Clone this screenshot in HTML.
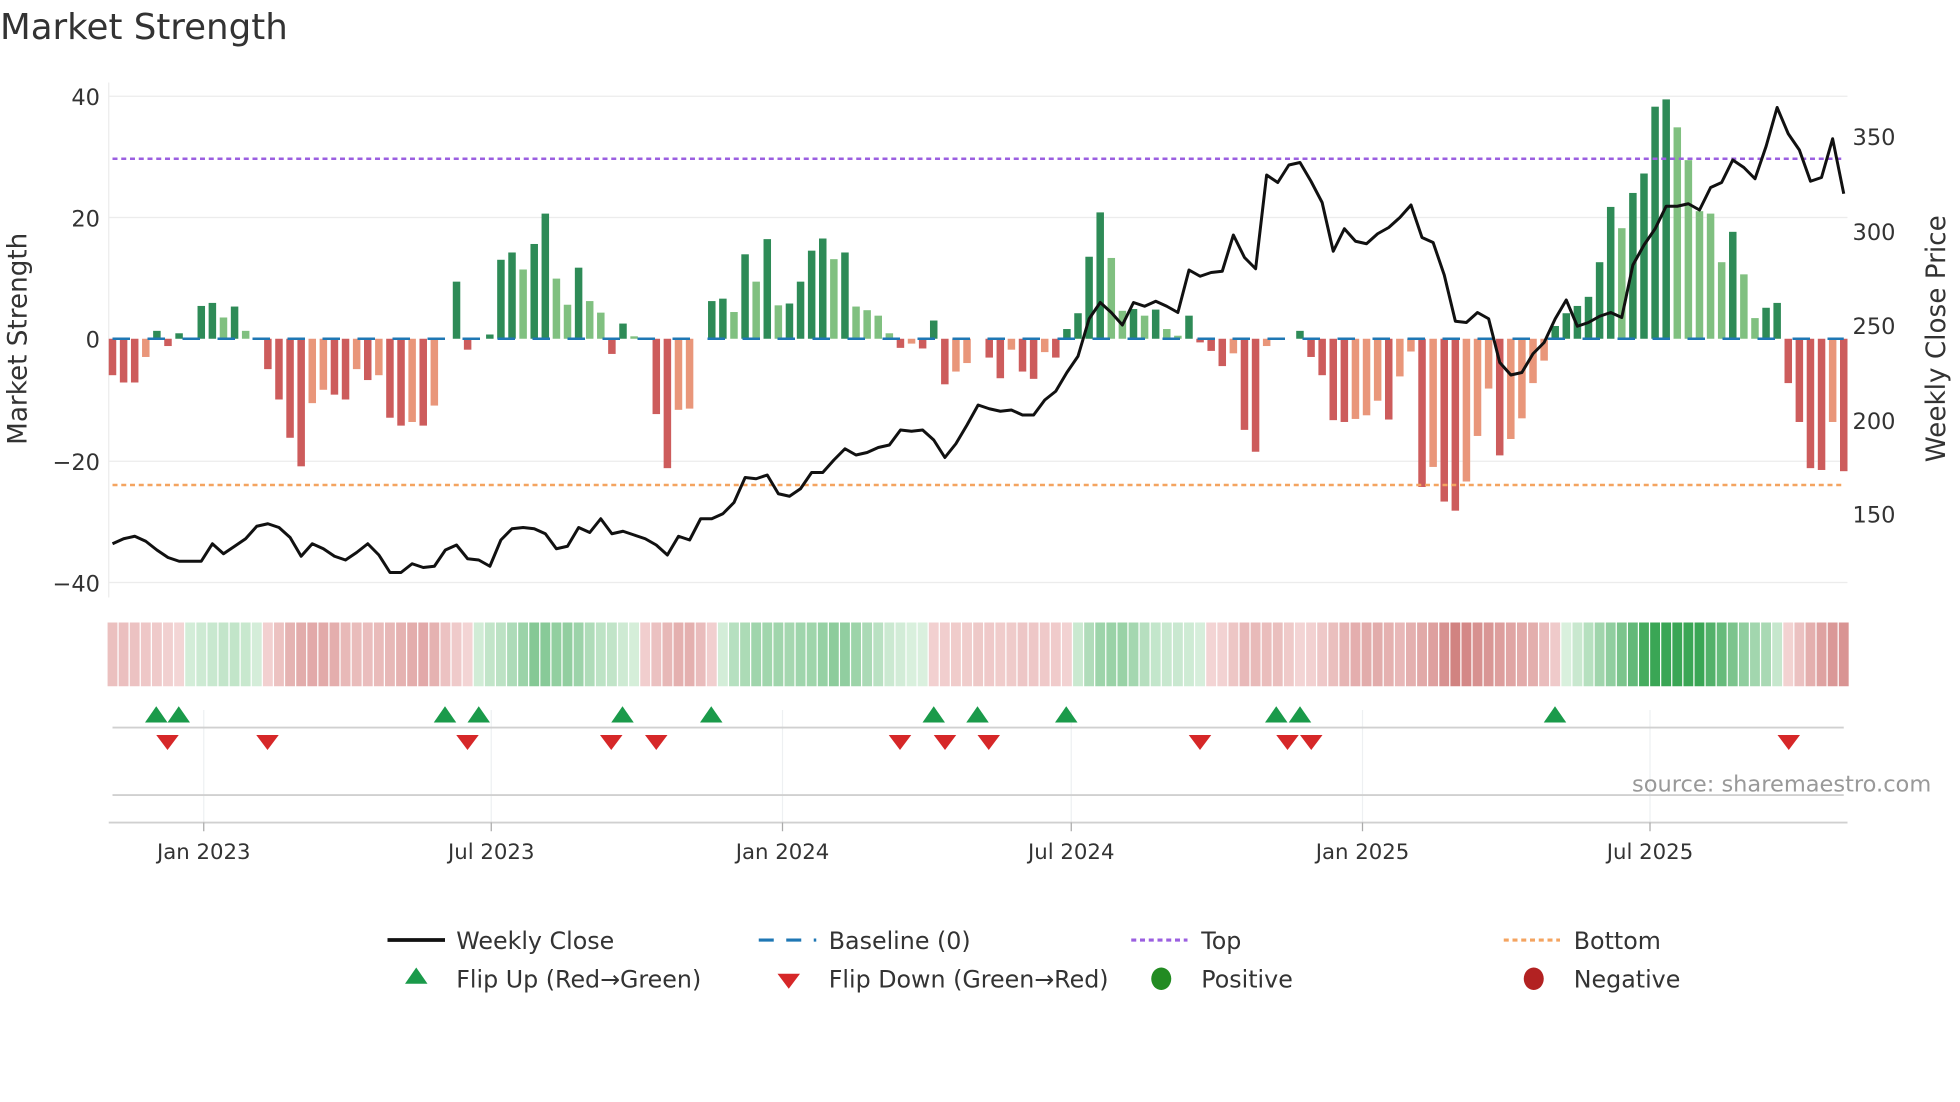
<!DOCTYPE html>
<html><head><meta charset="utf-8"><style>
html,body{margin:0;padding:0;background:#fff;}
svg{display:block;font-family:"DejaVu Sans","Liberation Sans",sans-serif;}
</style></head><body>
<svg id="c" width="1960" height="1102" viewBox="0 0 1568 881.6" xmlns="http://www.w3.org/2000/svg">
<rect width="1568" height="882" fill="#fff"/>
<text x="0" y="31" font-size="28.5" fill="#333">Market Strength</text>
<g stroke="#ececec" stroke-width="1">
<line x1="87" x2="1478" y1="77" y2="77"/><line x1="87" x2="1478" y1="174" y2="174"/>
<line x1="87" x2="1478" y1="369" y2="369"/><line x1="87" x2="1478" y1="466" y2="466"/>
</g>
<line x1="87" x2="87" y1="66" y2="478" stroke="#ececec"/>
<g font-size="18" fill="#333" text-anchor="end">
<text x="80" y="84">40</text><text x="80" y="181">20</text><text x="80" y="278">0</text>
<text x="80" y="376">−20</text><text x="80" y="473">−40</text>
</g>
<g font-size="18" fill="#333">
<text x="1482" y="116">350</text><text x="1482" y="192">300</text><text x="1482" y="267">250</text>
<text x="1482" y="343">200</text><text x="1482" y="418">150</text>
</g>
<text transform="translate(21,271) rotate(-90)" font-size="21" fill="#333" text-anchor="middle">Market Strength</text>
<text transform="translate(1556,271) rotate(-90)" font-size="21" fill="#333" text-anchor="middle">Weekly Close Price</text>
<g id="bars"></g>
<line x1="90" x2="1475" y1="271" y2="271" stroke="#1f77b4" stroke-width="2" stroke-dasharray="14,14"/>
<line x1="90" x2="1475" y1="127" y2="127" stroke="#9b5fe0" stroke-width="2" stroke-dasharray="4,3"/>
<line x1="90" x2="1475" y1="388" y2="388" stroke="#f4a460" stroke-width="2" stroke-dasharray="4,3"/>
<polyline id="price" fill="none" stroke="#111" stroke-width="2.4" stroke-linejoin="round"/>
<g id="strip"></g>
<g stroke="#eef0f2"><line x1="163" x2="163" y1="568" y2="658"/><line x1="393" x2="393" y1="568" y2="658"/><line x1="626" x2="626" y1="568" y2="658"/><line x1="857" x2="857" y1="568" y2="658"/><line x1="1090" x2="1090" y1="568" y2="658"/><line x1="1320" x2="1320" y1="568" y2="658"/></g>
<line x1="90" x2="1475" y1="582" y2="582" stroke="#d0d0d0" stroke-width="1.5"/>
<line x1="90" x2="1475" y1="636" y2="636" stroke="#d0d0d0" stroke-width="1.5"/>
<line x1="87" x2="1478" y1="658" y2="658" stroke="#d0d0d0" stroke-width="1.5"/>
<g id="tri"></g>
<g stroke="#aaa"><line x1="163" x2="163" y1="658" y2="665"/><line x1="393" x2="393" y1="658" y2="665"/><line x1="626" x2="626" y1="658" y2="665"/><line x1="857" x2="857" y1="658" y2="665"/><line x1="1090" x2="1090" y1="658" y2="665"/><line x1="1320" x2="1320" y1="658" y2="665"/></g>
<g font-size="17" fill="#333" text-anchor="middle">
<text x="163" y="687">Jan 2023</text><text x="393" y="687">Jul 2023</text><text x="626" y="687">Jan 2024</text>
<text x="857" y="687">Jul 2024</text><text x="1090" y="687">Jan 2025</text><text x="1320" y="687">Jul 2025</text>
</g>
<text x="1545" y="633" font-size="18" fill="#999" text-anchor="end">source: sharemaestro.com</text>
<g font-size="19" fill="#333">
<line x1="310" x2="356" y1="752" y2="752" stroke="#111" stroke-width="3"/>
<text x="365" y="759">Weekly Close</text>
<line x1="607" x2="653" y1="752" y2="752" stroke="#1f77b4" stroke-width="2.5" stroke-dasharray="12,10"/>
<text x="663" y="759">Baseline (0)</text>
<line x1="905" x2="950" y1="752" y2="752" stroke="#9b5fe0" stroke-width="2.5" stroke-dasharray="4,3"/>
<text x="961" y="759">Top</text>
<line x1="1203" x2="1248" y1="752" y2="752" stroke="#f4a460" stroke-width="2.5" stroke-dasharray="4,3"/>
<text x="1259" y="759">Bottom</text>
<polygon points="333,774 342,787 324,787" fill="#1a9a4a"/>
<text x="365" y="790">Flip Up (Red→Green)</text>
<polygon points="622,779 640,779 631,791" fill="#d62728"/>
<text x="663" y="790">Flip Down (Green→Red)</text>
<ellipse cx="929" cy="783" rx="8" ry="9" fill="#228b22"/>
<text x="961" y="790">Positive</text>
<ellipse cx="1227" cy="783" rx="8" ry="9" fill="#b22222"/>
<text x="1259" y="790">Negative</text>
</g>
</svg>
<script>
var V=[[-6,'r'],[-7.2,'r'],[-7.2,'r'],[-3,'s'],[1.3,'d'],[-1.2,'r'],[0.9,'d'],[0,''],[5.4,'d'],[5.9,'d'],[3.5,'l'],[5.3,'d'],[1.3,'l'],[0,''],
[-5,'r'],[-10,'r'],[-16.3,'r'],[-21,'r'],[-10.6,'s'],[-8.4,'s'],[-9.2,'r'],[-10,'r'],[-5,'s'],[-6.8,'r'],[-6,'s'],[-13,'r'],[-14.3,'r'],[-13.7,'s'],[-14.3,'r'],[-11,'s'],[0,''],
[9.4,'d'],[-1.8,'r'],[0,''],[0.7,'d'],[13,'d'],[14.2,'d'],[11.4,'l'],[15.6,'d'],[20.6,'d'],[9.9,'l'],[5.6,'l'],[11.7,'d'],[6.2,'l'],[4.3,'l'],[-2.5,'r'],[2.5,'d'],[0.4,'l'],[0,''],
[-12.4,'r'],[-21.3,'r'],[-11.7,'s'],[-11.5,'s'],[0,''],[6.2,'d'],[6.6,'d'],[4.4,'l'],[13.9,'d'],[9.4,'l'],[16.4,'d'],[5.5,'l'],[5.8,'d'],[9.4,'d'],[14.5,'d'],[16.5,'d'],[13.1,'l'],[14.2,'d'],[5.3,'l'],[4.7,'l'],[3.8,'l'],[0.9,'l'],
[-1.5,'r'],[-0.8,'s'],[-1.6,'r'],[3,'d'],[-7.5,'r'],[-5.4,'s'],[-4,'s'],[0,''],[-3.1,'r'],[-6.5,'r'],[-1.8,'s'],[-5.4,'r'],[-6.6,'r'],[-2.2,'s'],[-3.1,'r'],
[1.6,'d'],[4.2,'d'],[13.5,'d'],[20.8,'d'],[13.3,'l'],[4.6,'l'],[4.9,'d'],[3.8,'l'],[4.8,'d'],[1.6,'l'],[0.5,'l'],[3.8,'d'],
[-0.6,'r'],[-2,'r'],[-4.5,'r'],[-2.4,'s'],[-15,'r'],[-18.6,'r'],[-1.2,'s'],[0,''],[0,''],[1.3,'d'],
[-3,'r'],[-6,'r'],[-13.4,'r'],[-13.7,'r'],[-13.2,'s'],[-12.6,'s'],[-10.2,'s'],[-13.3,'r'],[-6.2,'s'],[-2.1,'s'],[-24.4,'r'],[-21.1,'s'],[-26.8,'r'],[-28.3,'r'],[-23.5,'s'],[-16,'s'],[-8.2,'s'],[-19.2,'r'],[-16.5,'s'],[-13.1,'s'],[-7.3,'s'],[-3.6,'s'],
[2.1,'d'],[4.2,'d'],[5.4,'d'],[6.9,'d'],[12.6,'d'],[21.7,'d'],[18.2,'l'],[24,'d'],[27.2,'d'],[38.2,'d'],[39.4,'d'],[34.8,'l'],[29.4,'l'],[21,'l'],[20.6,'l'],[12.6,'l'],[17.6,'d'],[10.6,'l'],[3.4,'l'],[5.1,'d'],[5.9,'d'],
[-7.3,'r'],[-13.7,'r'],[-21.3,'r'],[-21.6,'r'],[-13.7,'s'],[-21.8,'r']];
var P=[435,431,429,433,440,446,449,449,449,435,443,437,431,421,419,422,430,445,435,439,445,448,442,435,444,458,458,451,454,453,440,436,447,448,453,432,423,422,423,427,439,437,422,426,415,427,425,428,431,436,444,429,432,415,415,411,402,382,383,380,395,397,391,378,378,368,359,364,362,358,356,344,345,344,352,366,355,340,324,327,329,328,332,332,320,313,298,285,255,242,250,260,242,245,241,245,250,216,221,218,217,188,206,215,140,146,132,130,145,162,201,183,193,195,187,182,174,164,190,194,220,257,258,250,255,290,300,298,283,274,255,240,261,258,253,250,254,212,196,183,165,165,163,168,150,146,128,134,143,117,86,107,120,145,142,111,155];
var C={d:'#2e8b57',l:'#80c080',r:'#cd5c5c',s:'#e9967a'};
var ns='http://www.w3.org/2000/svg',b=document.getElementById('bars'),st=document.getElementById('strip');
var n=V.length,dx=(1475-90)/(n-1);
function el(t,a,p){var e=document.createElementNS(ns,t);for(var k in a)e.setAttribute(k,a[k]);p.appendChild(e);return e;}
var pts=[];
for(var i=0;i<n;i++){var x=90+i*dx,v=V[i][0];
 if(v!=0){var h=Math.abs(v)*4.86;el('rect',{x:x-3,y:v>0?271-h:271,width:6,height:h,fill:C[V[i][1]]},b);}
 pts.push(x.toFixed(1)+','+(i<P.length?P[i]:P[P.length-1]));
 var s=0,c=0;for(var j=i-3;j<=i+1;j++){if(j>=0&&j<n){s+=V[j][0];c++;}}s/=c;
 var t=Math.min(1,Math.abs(s)/28),col;
 if(s>=0){col='rgb('+Math.round(218-(218-58)*t)+','+Math.round(240-(240-166)*t)+','+Math.round(222-(222-85)*t)+')';}
 else{col='rgb('+Math.round(244-(244-205)*t)+','+Math.round(214-(214-120)*t)+','+Math.round(214-(214-118)*t)+')';}
 el('rect',{x:x-dx/2+0.5,y:498,width:dx-1,height:51,fill:col},st);
}
document.getElementById('price').setAttribute('points',pts.join(' '));
var tr=document.getElementById('tri');
[125,143,356,383,498,569,747,782,853,1021,1040,1244].forEach(function(x){el('polygon',{points:(x)+',565 '+(x+9)+',578 '+(x-9)+',578',fill:'#1a9a4a'},tr);});
[134,214,374,489,525,720,756,791,960,1030,1049,1431].forEach(function(x){el('polygon',{points:(x-9)+',588 '+(x+9)+',588 '+x+',600',fill:'#d62728'},tr);});
</script>
</body></html>
